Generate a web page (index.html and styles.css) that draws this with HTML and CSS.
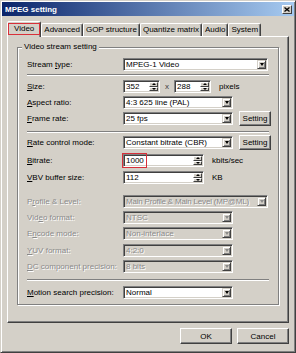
FILE: index.html
```html
<!DOCTYPE html>
<html lang="en">
<head>
    <meta charset="UTF-8">
    <title>MPEG setting</title>
    <link rel="stylesheet" href="styles.css">
</head>
<body>
    <div class="window">
        <div class="titlebar">
            <span class="title">MPEG setting</span>
            <span class="close">
                <svg width="6" height="5" viewBox="0 0 6 5"><path d="M0.5 0.5L5.5 4.5M5.5 0.5L0.5 4.5" stroke="#000" stroke-width="1.3"/></svg>
            </span>
        </div>

        <div class="tabs">
            <div class="tab active"><span class="mark">Video</span></div>
            <div class="tab">Advanced</div>
            <div class="tab">GOP structure</div>
            <div class="tab">Quantize matrix</div>
            <div class="tab">Audio</div>
            <div class="tab">System</div>
        </div>

        <div class="panel">
            <div class="group">
                <div class="caption">Video stream setting</div>

                <div class="row first">
                    <label>Stream <u>t</u>ype:</label>
                    <div class="combo w-long"><span class="value">MPEG-1 Video</span><span class="drop"></span></div>
                </div>
                <div class="sep"></div>

                <div class="row gap-4">
                    <label><u>S</u>ize:</label>
                    <div class="spin w-size"><span class="value">352</span><span class="arrows"><i class="up"></i><i class="down"></i></span></div>
                    <span class="times">x</span>
                    <div class="spin w-size"><span class="value">288</span><span class="arrows"><i class="up"></i><i class="down"></i></span></div>
                    <span class="unit">pixels</span>
                </div>
                <div class="row">
                    <label><u>A</u>spect ratio:</label>
                    <div class="combo w-mid"><span class="value">4:3 625 line (PAL)</span><span class="drop"></span></div>
                </div>
                <div class="row">
                    <label><u>F</u>rame rate:</label>
                    <div class="combo w-mid"><span class="value">25 fps</span><span class="drop"></span></div>
                    <button class="btn small">Setting</button>
                </div>
                <div class="sep gap-6"></div>

                <div class="row">
                    <label><u>R</u>ate control mode:</label>
                    <div class="combo w-mid"><span class="value">Constant bitrate (CBR)</span><span class="drop"></span></div>
                    <button class="btn small">Setting</button>
                </div>
                <div class="row gap-5">
                    <label><u>B</u>itrate:</label>
                    <div class="spin w-rate"><span class="value marked">1000</span><span class="arrows"><i class="up"></i><i class="down"></i></span></div>
                    <span class="unit">kbits/sec</span>
                </div>
                <div class="row gap-4">
                    <label><u>V</u>BV buffer size:</label>
                    <div class="spin w-rate"><span class="value">112</span><span class="arrows"><i class="up"></i><i class="down"></i></span></div>
                    <span class="unit">KB</span>
                </div>

                <div class="row gap-11 off">
                    <label>P<u>r</u>ofile &amp; Level:</label>
                    <div class="combo w-long"><span class="value tight">Main Profile &amp; Main Level (MP@ML)</span><span class="drop"></span></div>
                </div>
                <div class="row off">
                    <label>Vid<u>e</u>o format:</label>
                    <div class="combo w-mid"><span class="value">NTSC</span><span class="drop"></span></div>
                </div>
                <div class="row off">
                    <label>E<u>n</u>code mode:</label>
                    <div class="combo w-mid"><span class="value">Non-interlace</span><span class="drop"></span></div>
                </div>
                <div class="row gap-4 off">
                    <label><u>Y</u>UV format:</label>
                    <div class="combo w-mid"><span class="value">4:2:0</span><span class="drop"></span></div>
                </div>
                <div class="row off">
                    <label><u>D</u>C component precision:</label>
                    <div class="combo w-mid"><span class="value">8 bits</span><span class="drop"></span></div>
                </div>
                <div class="sep gap-6"></div>

                <div class="row gap-5">
                    <label><u>M</u>otion search precision:</label>
                    <div class="combo w-mid"><span class="value">Normal</span><span class="drop"></span></div>
                </div>
            </div>
        </div>

        <div class="actions">
            <button class="btn">OK</button>
            <button class="btn">Cancel</button>
        </div>
    </div>
</body>
</html>
```

FILE: styles.css
```css
/* Classic Windows dialog, scaled down */
* {
    box-sizing: border-box;
}

body {
    margin: 0;
    font-family: 'Liberation Sans', Arial, sans-serif;
    font-size: 8px;
    color: #000;
    background: #d4d0c8;
}

.window {
    width: 296px;
    height: 353px;
    padding: 1px;
    background: #d4d0c8;
    border: 1px solid;
    border-color: #d4d0c8 #404040 #404040 #d4d0c8;
    box-shadow: inset 1px 1px #fff, inset -1px -1px #808080;
}

.titlebar {
    height: 14px;
    display: flex;
    align-items: center;
    justify-content: space-between;
    padding: 0 2px 0 3px;
    background: linear-gradient(to right, #0a246a, #a6caf0);
}
.title {
    color: #fff;
    font-weight: 700;
    font-size: 8px;
}
.close {
    width: 10px;
    height: 9px;
    display: flex;
    align-items: center;
    justify-content: center;
    background: #d4d0c8;
    border: 1px solid;
    border-color: #fff #404040 #404040 #fff;
}

/* tab strip */
.tabs {
    display: flex;
    align-items: flex-end;
    height: 15px;
    margin-top: 5px;
    padding-left: 5px;
}
.tab {
    height: 13px;
    padding: 0 2px;
    line-height: 11px;
    border: 1px solid;
    border-bottom: none;
    border-color: #fff #404040 transparent #fff;
    border-radius: 2px 2px 0 0;
    box-shadow: inset -1px 0 #808080;
    white-space: nowrap;
}
.tab.active {
    position: relative;
    z-index: 1;
    height: 16px;
    margin-bottom: -1px;
    padding: 1px 0 0 0;
    background: #d4d0c8;
}
.mark {
    display: block;
    height: 12px;
    padding: 0 5px;
    line-height: 9px;
    border: 1.5px solid #d8303a;
}

.panel {
    width: 282px;
    height: 287px;
    margin-left: 5px;
    padding-top: 1px;
    border: 1px solid;
    border-color: #fff #404040 #404040 #fff;
    box-shadow: inset -1px -1px #808080;
}

/* group box */
.group {
    margin: 9px 9px 0;
    padding-bottom: 5px;
    border: 1px solid #808080;
    box-shadow: inset 1px 1px #fff, 1px 1px #fff;
}
.caption {
    width: fit-content;
    margin: -6px 0 0 4px;
    padding: 0 2px;
    line-height: 10px;
    background: #d4d0c8;
}

.row {
    display: flex;
    align-items: center;
    height: 13px;
    margin-top: 3px;
    padding-left: 9px;
}
.row.first { margin-top: 6px; }
.gap-4 { margin-top: 4px; }
.gap-5 { margin-top: 5px; }
.gap-6 { margin-top: 6px; }
.gap-11 { margin-top: 11px; }

.row label {
    flex: none;
    width: 96px;
    white-space: nowrap;
}

.sep {
    height: 2px;
    margin: 3px 9px 0 9px;
    border-top: 1px solid #808080;
    border-bottom: 1px solid #fff;
}
.sep.gap-6 { margin-top: 6px; }

/* sunken fields */
.combo,
.spin {
    height: 13px;
    display: flex;
    align-items: stretch;
    background: #fff;
    border: 1px solid;
    border-color: #808080 #fff #fff #808080;
    box-shadow: inset 1px 1px #404040, inset -1px -1px #d4d0c8;
    padding: 1px;
}
.value {
    flex: 1;
    padding-left: 1px;
    line-height: 10px;
    white-space: nowrap;
    overflow: hidden;
}
.value.tight {
    letter-spacing: -0.2px;
}
.w-long { width: 145px; }
.w-mid { width: 110px; }
.w-size { width: 37px; }
.w-rate { width: 81px; }

.drop {
    width: 9px;
    flex: none;
    display: flex;
    align-items: center;
    justify-content: center;
    background: #d4d0c8;
    border: 1px solid;
    border-color: #d4d0c8 #404040 #404040 #d4d0c8;
    box-shadow: inset 1px 1px #fff, inset -1px -1px #808080;
}
.drop::after {
    content: '';
    border-style: solid;
    border-width: 3px 2.5px 0;
    border-color: #000 transparent transparent;
}

.arrows {
    width: 9px;
    flex: none;
    display: flex;
    flex-direction: column;
}
.arrows i {
    flex: 1;
    display: flex;
    align-items: center;
    justify-content: center;
    background: #d4d0c8;
    border: 1px solid;
    border-color: #fff #404040 #404040 #fff;
}
.arrows i::after {
    content: '';
    border-style: solid;
    border-color: transparent;
}
.arrows .up::after {
    border-width: 0 2px 2px;
    border-bottom-color: #000;
}
.arrows .down::after {
    border-width: 2px 2px 0;
    border-top-color: #000;
}

.marked {
    flex: none;
    width: 25px;
    margin: -3px 0 -3px -3px;
    padding-left: 3px;
    line-height: 13px;
    border: 1.5px solid #d8303a;
}
.spin.w-rate .marked + .arrows {
    margin-left: auto;
}

.times {
    width: 14px;
    text-align: center;
    color: #404040;
}
.unit {
    margin-left: 8px;
}

/* disabled rows */
.off label,
.off .value {
    color: #8a8a8a;
    text-shadow: 1px 1px #fff;
}
.off .combo {
    background: #d4d0c8;
}
.off .drop::after {
    border-top-color: #8a8a8a;
}

/* push buttons */
.btn {
    height: 16px;
    padding: 0;
    font-family: inherit;
    font-size: 8px;
    color: #000;
    background: #d4d0c8;
    border: 1px solid;
    border-color: #fff #404040 #404040 #fff;
    box-shadow: inset -1px -1px #808080;
}
.btn.small {
    width: 32px;
    height: 15px;
    margin: -1px 0 -1px 6px;
}

.actions {
    display: flex;
    justify-content: flex-end;
    gap: 5px;
    margin-top: 5px;
    padding-right: 5px;
}
.actions .btn {
    width: 52px;
}
```
